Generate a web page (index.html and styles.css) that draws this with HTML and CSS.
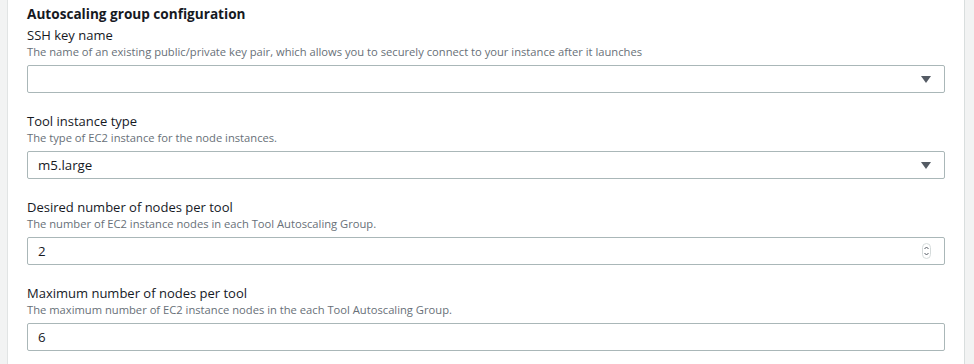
FILE: index.html
```html
<!DOCTYPE html>
<html>
<head>
  <meta charset="utf-8">
  <title>Autoscaling group configuration</title>
  <link rel="stylesheet" href="styles.css">
</head>
<body>
  <div class="page">
    <div class="rail-left"></div>
    <div class="main">
      <div class="section-title">Autoscaling group configuration</div>

      <div class="field">
        <div class="label">SSH key name</div>
        <div class="desc">The name of an existing public/private key pair, which allows you to securely connect to your instance after it launches</div>
        <div class="control select">
          <span class="value"></span>
          <span class="caret"></span>
        </div>
      </div>

      <div class="field">
        <div class="label">Tool instance type</div>
        <div class="desc">The type of EC2 instance for the node instances.</div>
        <div class="control select">
          <span class="value">m5.large</span>
          <span class="caret"></span>
        </div>
      </div>

      <div class="field">
        <div class="label">Desired number of nodes per tool</div>
        <div class="desc">The number of EC2 instance nodes in each Tool Autoscaling Group.</div>
        <div class="control">
          <span class="value">2</span>
          <span class="spinner">
            <svg width="9" height="16" viewBox="0 0 9 16">
              <rect x="0.5" y="0.5" width="8" height="15" rx="4" fill="#fff" stroke="#d5dbdb"/>
              <path d="M2.5 6 L4.5 4 L6.5 6" fill="none" stroke="#545b64" stroke-width="1"/>
              <path d="M2.5 10 L4.5 12 L6.5 10" fill="none" stroke="#545b64" stroke-width="1"/>
            </svg>
          </span>
        </div>
      </div>

      <div class="field">
        <div class="label">Maximum number of nodes per tool</div>
        <div class="desc">The maximum number of EC2 instance nodes in the each Tool Autoscaling Group.</div>
        <div class="control">
          <span class="value">6</span>
        </div>
      </div>
    </div>
    <div class="rail-right"></div>
  </div>
</body>
</html>
```

FILE: styles.css
```css
body {
  margin: 0;
  font-family: "Open Sans", "Noto Sans", sans-serif;
  color: #16191f;
  background: #fff;
}
.page {
  display: flex;
  height: 364px;
  overflow: hidden;
}
.rail-left {
  width: 7px;
  background: #f2f3f3;
  border-right: 1px solid #e1e4e4;
}
.rail-right {
  width: 9px;
  background: #f2f3f3;
  border-left: 1px solid #d9dede;
}
.main {
  flex: 1;
  padding: 4px 19px 0 19px;
}
.section-title {
  font-size: 13.6px;
  font-weight: 700;
  line-height: 20px;
  margin-bottom: 2px;
}
.field {
  margin-bottom: 19px;
}
.label {
  font-size: 13px;
  line-height: 18px;
  color: #16191f;
}
.desc {
  font-size: 11.2px;
  line-height: 16px;
  color: #687078;
  margin-bottom: 5px;
}
.control {
  display: flex;
  align-items: center;
  height: 28px;
  box-sizing: border-box;
  border: 1px solid #aab7b8;
  border-radius: 2px;
  padding: 0 9px 0 10px;
}
.value {
  flex: 1;
  font-size: 13.3px;
}
.caret {
  width: 0;
  height: 0;
  border-left: 5px solid transparent;
  border-right: 5px solid transparent;
  border-top: 7px solid #545b64;
  margin-right: 4px;
}
.spinner {
  display: flex;
  margin-right: 4px;
}
```
